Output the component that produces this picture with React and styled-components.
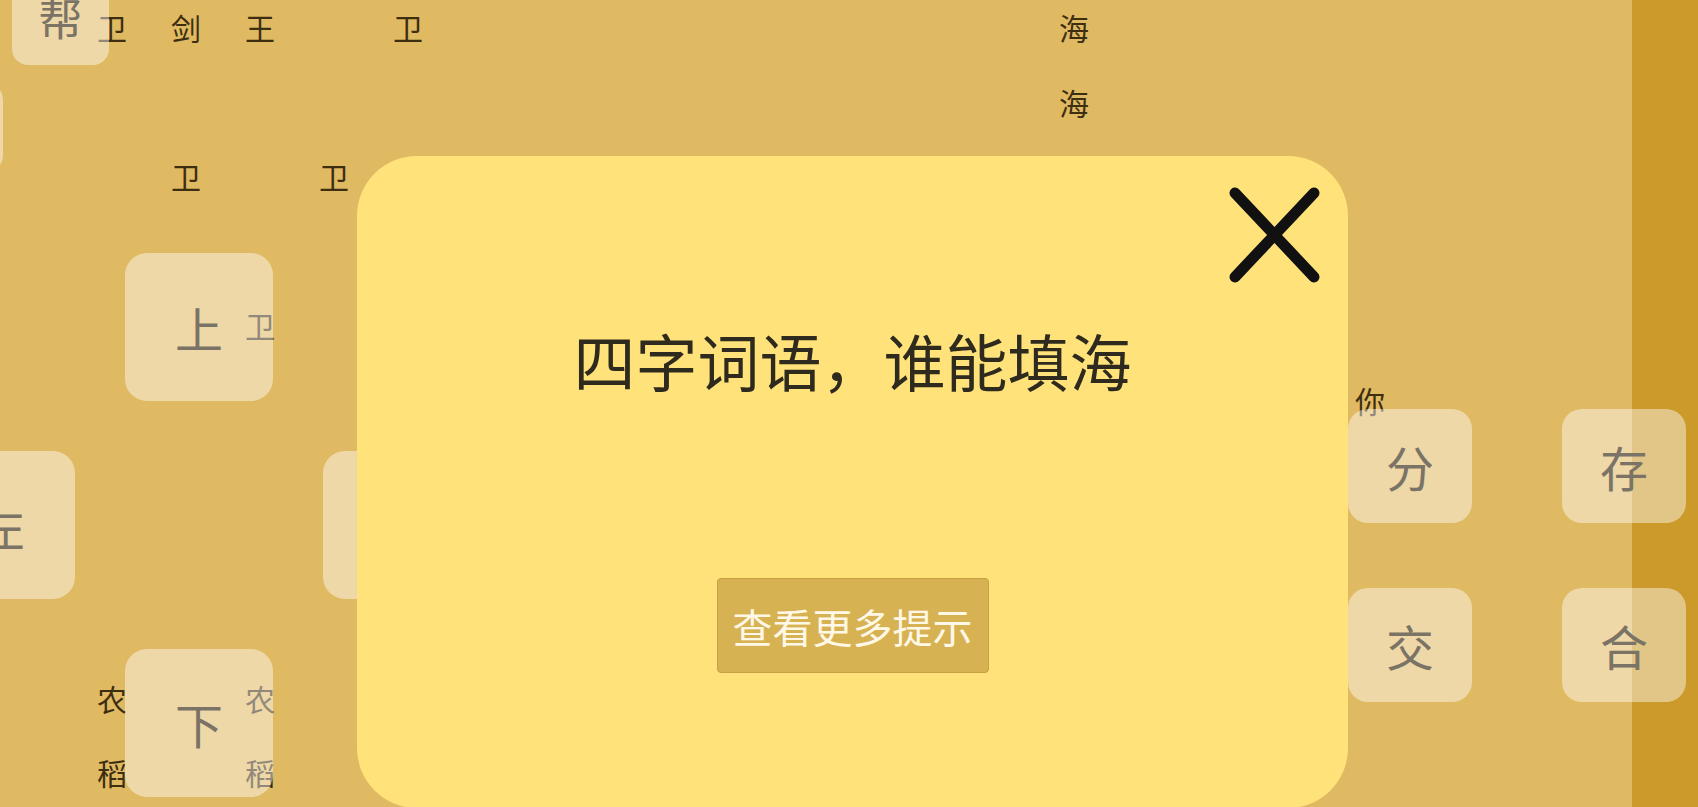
import React from 'react';
import styled, { createGlobalStyle } from 'styled-components';

const GlobalStyle = createGlobalStyle`
    html, body {
        margin: 0;
        padding: 0;
        overflow: hidden;
    }

    body {
        font-family: 'Noto Sans CJK SC', 'Noto Sans', sans-serif;
    }
`;

// board cells: [row, col, char]
const cells = [
    [0, 0, '卫'],
    [0, 1, '剑'],
    [0, 2, '王'],
    [0, 4, '卫'],
    [0, 13, '海'],
    [1, 13, '海'],
    [2, 1, '卫'],
    [2, 3, '卫'],
    [4, 2, '卫'],
    [5, 17, '你'],
    [9, 0, '农'],
    [9, 2, '农'],
    [10, 0, '稻'],
    [10, 2, '稻'],
];

const pad = [
    { row: 1, col: 2, label: '上' },
    { row: 2, col: 1, label: '左' },
    { row: 2, col: 3, label: '右' },
    { row: 3, col: 2, label: '下' },
];

const actions = ['分', '存', '交', '合'];

function CloseIcon() {
    return (
        <svg width="91" height="96" viewBox="0 0 91 96">
            <g stroke="#111" strokeWidth="11" strokeLinecap="round">
                <line x1="6" y1="6" x2="85" y2="90" />
                <line x1="85" y1="6" x2="6" y2="90" />
            </g>
        </svg>
    );
}

function App() {
    return (
        <>
            <GlobalStyle />
            <Stage>
                <Field>
                    <Board>
                        {cells.map(([r, c, ch], i) => (
                            <Cell key={i} $row={r} $col={c}>
                                {ch}
                            </Cell>
                        ))}
                    </Board>
                </Field>
                <Strip />

                <HelpKey>帮</HelpKey>
                <EdgeKey />

                <DPad>
                    {pad.map((k) => (
                        <PadKey key={k.label} $row={k.row} $col={k.col}>
                            {k.label}
                        </PadKey>
                    ))}
                </DPad>

                <ActionPad>
                    {actions.map((a) => (
                        <ActionKey key={a}>{a}</ActionKey>
                    ))}
                </ActionPad>

                <Modal>
                    <CloseButton aria-label="关闭">
                        <CloseIcon />
                    </CloseButton>
                    <Title>四字词语，谁能填海</Title>
                    <HintButton>查看更多提示</HintButton>
                </Modal>
            </Stage>
        </>
    );
}

const Stage = styled.div`
    position: relative;
    width: 1698px;
    height: 807px;
    overflow: hidden;
    display: flex;
    background: #e0ba62;
`;

const Field = styled.div`
    flex: 1 1 0;
    min-width: 0;
    overflow: hidden;
    padding-left: 75px;
`;

const Board = styled.div`
    display: grid;
    margin-top: -10px;
    grid-template-columns: repeat(22, 74px);
    grid-template-rows: repeat(11, 74.5px);
`;

const Cell = styled.div`
    grid-row: ${(p) => p.$row + 1};
    grid-column: ${(p) => p.$col + 1};
    display: flex;
    align-items: center;
    justify-content: center;
    font-size: 30px;
    line-height: 1;
    color: #3d2e12;
`;

const Strip = styled.div`
    flex: 0 0 66px;
    background: #cc9a2a;
`;

const Key = styled.div`
    display: flex;
    align-items: center;
    justify-content: center;
    background: rgba(255, 255, 255, 0.44);
    color: #7a7366;
    font-size: 48px;
    line-height: 1;
    border-radius: 22px;
`;

const HelpKey = styled(Key)`
    position: absolute;
    left: 12px;
    top: -32px;
    width: 97px;
    height: 97px;
    font-size: 44px;
    border-radius: 16px;
`;

const EdgeKey = styled(Key)`
    position: absolute;
    left: -94px;
    top: 85px;
    width: 97px;
    height: 85px;
    border-radius: 14px;
`;

const DPad = styled.div`
    position: absolute;
    left: -73px;
    top: 253px;
    display: grid;
    grid-template-columns: repeat(3, 148px);
    grid-template-rows: repeat(3, 148px);
    column-gap: 50px;
    row-gap: 50px;
`;

const PadKey = styled(Key)`
    grid-row: ${(p) => p.$row};
    grid-column: ${(p) => p.$col};
`;

const ActionPad = styled.div`
    position: absolute;
    left: 1348px;
    top: 409px;
    display: grid;
    grid-template-columns: repeat(2, 124px);
    grid-template-rows: repeat(2, 114px);
    column-gap: 90px;
    row-gap: 65px;
`;

const ActionKey = styled(Key)`
    border-radius: 20px;
`;

const Modal = styled.div`
    position: absolute;
    left: 357px;
    top: 156px;
    width: 991px;
    height: 652px;
    border-radius: 60px;
    background: #ffe37a;
    display: flex;
    flex-direction: column;
    align-items: center;
    padding-top: 167px;
    box-sizing: border-box;
`;

const CloseButton = styled.button`
    position: absolute;
    top: 31px;
    right: 28px;
    padding: 0;
    border: none;
    background: none;
    display: flex;
    cursor: pointer;
`;

const Title = styled.h1`
    margin: 0;
    font-size: 62px;
    line-height: 74px;
    font-weight: 400;
    color: #2e2a1e;
`;

const HintButton = styled.button`
    margin-top: 181px;
    width: 272px;
    height: 95px;
    padding: 0;
    background: #d7b253;
    border: 1px solid #c6a042;
    border-radius: 4px;
    color: #fff8e6;
    font-family: 'Noto Sans CJK SC', 'Noto Sans', sans-serif;
    font-size: 40px;
    cursor: pointer;
`;

export default App;
